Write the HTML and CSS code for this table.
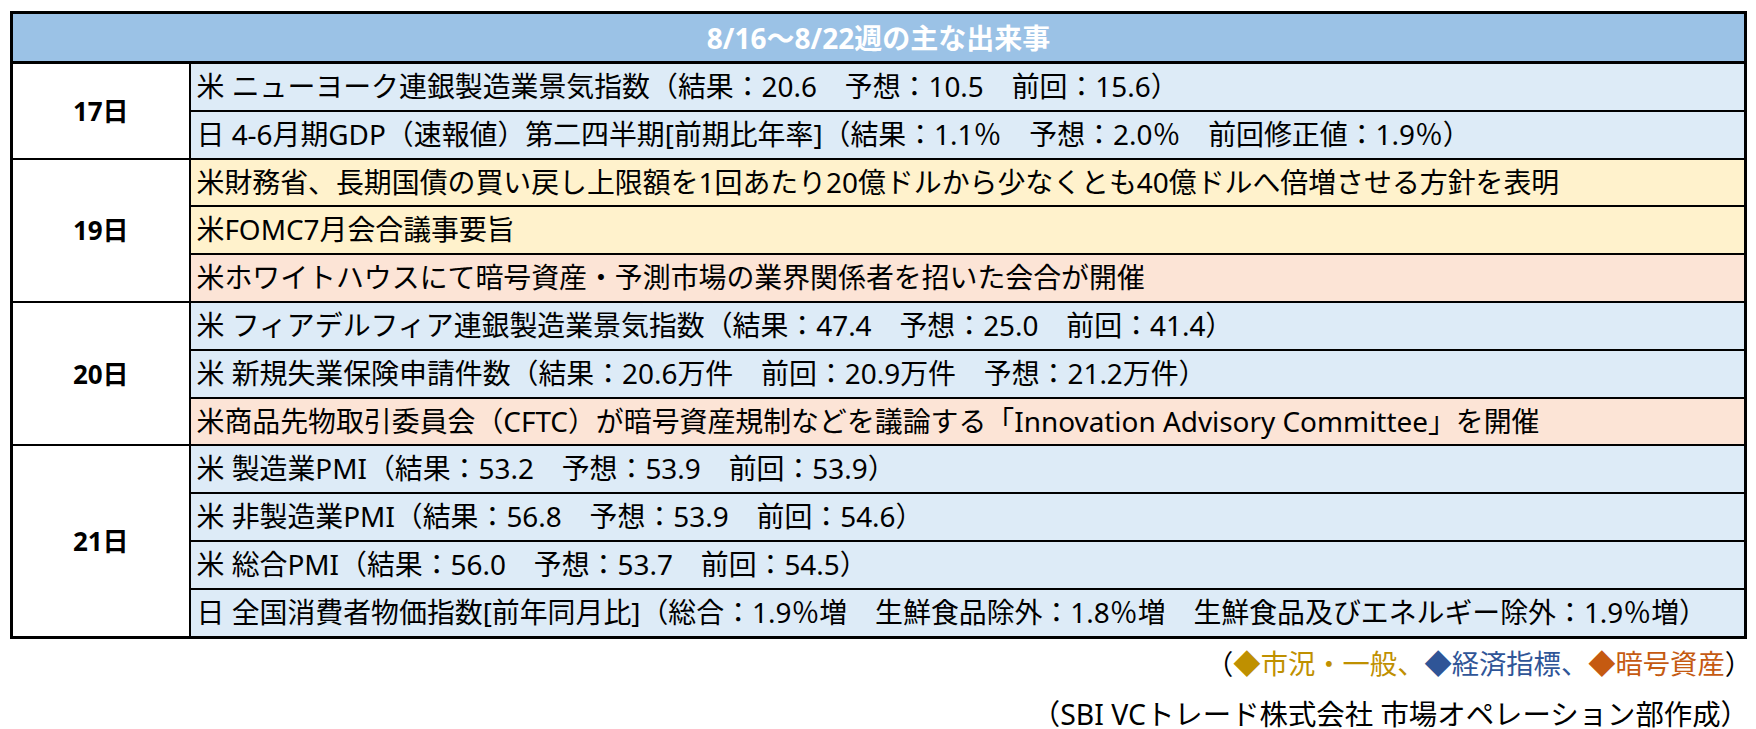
FILE: index.html
```html
<!DOCTYPE html>
<html lang="ja">
<head>
<meta charset="utf-8">
<title>8/16〜8/22週の主な出来事</title>
<link rel="stylesheet" href="styles.css">
</head>
<body>
<div class="page">
  <table class="events">
    <colgroup><col class="c-date"><col class="c-body"></colgroup>
    <thead>
      <tr class="head"><th colspan="2">8/16〜8/22週の主な出来事</th></tr>
    </thead>
    <tbody>
      <tr><td class="date" rowspan="2">17日</td><td class="ev blue">米 ニューヨーク連銀製造業景気指数（結果：20.6　予想：10.5　前回：15.6）</td></tr>
      <tr><td class="ev blue">日 4-6月期GDP（速報値）第二四半期[前期比年率]（結果：1.1<span class="fw">％</span>　予想：2.0<span class="fw">％</span>　前回修正値：1.9<span class="fw">％</span>）</td></tr>
      <tr><td class="date" rowspan="3">19日</td><td class="ev yellow">米財務省、長期国債の買い戻し上限額を1回あたり20億ドルから少なくとも40億ドルへ倍増させる方針を表明</td></tr>
      <tr><td class="ev yellow">米FOMC7月会合議事要旨</td></tr>
      <tr><td class="ev pink">米ホワイトハウスにて暗号資産・予測市場の業界関係者を招いた会合が開催</td></tr>
      <tr><td class="date" rowspan="3">20日</td><td class="ev blue">米 フィアデルフィア連銀製造業景気指数（結果：47.4　予想：25.0　前回：41.4）</td></tr>
      <tr><td class="ev blue">米 新規失業保険申請件数（結果：20.6万件　前回：20.9万件　予想：21.2万件）</td></tr>
      <tr><td class="ev pink">米商品先物取引委員会（CFTC）が暗号資産規制などを議論する「Innovation Advisory Committee」を開催</td></tr>
      <tr><td class="date" rowspan="4">21日</td><td class="ev blue">米 製造業PMI（結果：53.2　予想：53.9　前回：53.9）</td></tr>
      <tr><td class="ev blue">米 非製造業PMI（結果：56.8　予想：53.9　前回：54.6）</td></tr>
      <tr><td class="ev blue">米 総合PMI（結果：56.0　予想：53.7　前回：54.5）</td></tr>
      <tr><td class="ev blue">日 全国消費者物価指数[前年同月比]（総合：1.9<span class="fw">％</span>増　生鮮食品除外：1.8<span class="fw">％</span>増　生鮮食品及びエネルギー除外：1.9<span class="fw">％</span>増）</td></tr>
    </tbody>
  </table>
  <div class="notes">
    <p class="legend">（<span class="gold">◆市況・一般、</span><span class="navy">◆経済指標、</span><span class="rust">◆暗号資産</span>）</p>
    <p class="credit">（SBI VCトレード株式会社 市場オペレーション部作成）</p>
  </div>
</div>
</body>
</html>
```
FILE: styles.css
```css
html, body {
  margin: 0;
  padding: 0;
  background: #ffffff;
}

body {
  font-family: "Noto Sans", "Noto Sans CJK JP", sans-serif;
  color: #000000;
}

.page {
  padding: 11px 0 0 10px;
  width: 1737px;
}

.events {
  width: 1737px;
  border-collapse: collapse;
  table-layout: fixed;
  border: 3px solid #000;
}

.c-date { width: 178px; }

.head th {
  height: 47px;
  padding: 0;
  background: #9bc2e6;
  color: #ffffff;
  font-size: 28px;
  font-weight: 700;
  text-align: center;
  border: 3px solid #000;
  line-height: 1;
}

.events td {
  height: 45.8px;
  border: 2px solid #000;
  padding: 0;
  line-height: 1;
}

.date {
  background: #ffffff;
  font-size: 26px;
  font-weight: 700;
  text-align: center;
  vertical-align: middle;
}

.ev {
  font-size: 27.9px;
  padding-left: 6px !important;
  white-space: nowrap;
  vertical-align: middle;
}

.fw {
  font-family: "Noto Sans CJK JP", sans-serif;
}

.blue { background: #ddebf7; }
.yellow { background: #fff2cc; }
.pink { background: #fce4d6; }

.notes {
  width: 1742px;
}

.legend, .credit {
  margin: 0;
  line-height: 50px;
  text-align: right;
}

.legend {
  font-size: 27.3px;
}

.credit {
  font-size: 28.4px;
  padding-right: 3px;
}

.gold { color: #bf9000; }
.navy { color: #2f5597; }
.rust { color: #c55a11; }
```
